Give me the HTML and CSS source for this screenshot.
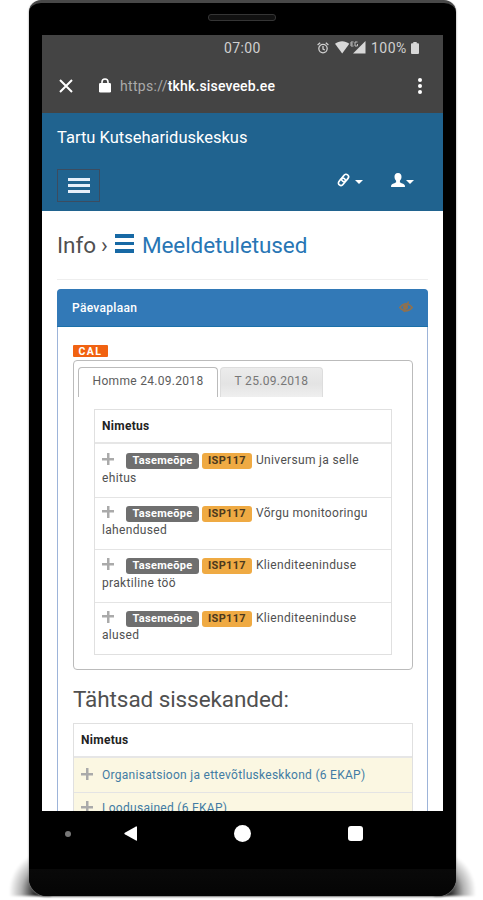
FILE: index.html
```html
<!DOCTYPE html>
<html lang="et">
<head>
  <meta charset="utf-8">
  <title>Tartu Kutsehariduskeskus</title>
  <link rel="stylesheet" href="styles.css">
</head>
<body>
  <div class="phone">
    <div class="speaker"></div>

    <div class="screen">
      <div class="browser">
        <div class="status-bar">
          <span class="clock">07:00</span>
          <svg class="alarm" width="12" height="12" viewBox="0 0 12 12" fill="none" stroke="#d0d0d0" stroke-width="1.3">
            <circle cx="6" cy="6.6" r="4.2"/>
            <path d="M6 4v3l1.8 1M.6 3 3.2.8M11.4 3 8.8.8"/>
          </svg>
          <svg class="signal" width="31" height="13" viewBox="0 0 31 13" fill="#d8d8d8">
            <path d="M0 2.800C4.200-.6 10-.6 14.300 2.800L7.200 12.400z"/>
            <path d="M30.500 0v12.400H18z"/>
            <path d="M16 1h2.500M16 3h2M16 5h2.500M16 1v4M22.500 1H20v4h2.500V3" fill="none" stroke="#bdbdbd"/>
          </svg>
          <span class="percent">100%</span>
          <svg class="battery" width="8" height="12" viewBox="0 0 8 12" fill="#d8d8d8">
            <path d="M2.300 0h3.400v1.200H7q1 0 1 1V11q0 1-1 1H1q-1 0-1-1V2.200q0-1 1-1h1.300z"/>
          </svg>
        </div>

        <div class="url-bar">
          <svg class="close" width="14" height="14" viewBox="0 0 14 14" stroke="#fff" stroke-width="2">
            <path d="M1 1l12 12M13 1L1 13"/>
          </svg>
          <svg class="lock" width="12" height="15" viewBox="0 0 12 15">
            <rect x="0" y="5" width="12" height="9.500" rx="1.300" fill="#fff"/>
            <path d="M3 6V4a3 3 0 0 1 6 0v2" fill="none" stroke="#fff" stroke-width="1.600"/>
          </svg>
          <div class="url">https://<b>tkhk.siseveeb.ee</b></div>
          <div class="dots"><i></i><i></i><i></i></div>
        </div>
      </div>

      <nav>
        <div class="brand">Tartu Kutsehariduskeskus</div>
        <div class="nav-row">
          <button class="menu-btn"><i></i><i></i><i></i></button>
          <div class="nav-icons">
            <a class="nav-link">
              <svg width="13" height="14" viewBox="0 0 13 14" fill="none" stroke="#fff" stroke-width="1.700" stroke-linecap="round">
                <rect x="5.600" y="1" width="5" height="8" rx="2.500" transform="rotate(38 8.100 5)"/>
                <rect x="2.400" y="4.800" width="5" height="8" rx="2.500" transform="rotate(38 4.900 8.800)"/>
              </svg>
              <span class="caret"></span>
            </a>
            <a class="nav-link user">
              <svg width="14" height="14" viewBox="0 0 14 14" fill="#fff">
                <path d="M7 0c2.600 0 3.600 1.700 3.500 4-.1 1.800-.8 2.900-1.600 3.700v1.500c.6.9 4.200 1.300 4.900 3.100l.2 1.700H0l.2-1.700c.7-1.800 4.300-2.200 4.900-3.100V7.700C4.300 6.900 3.600 5.800 3.500 4 3.400 1.700 4.400 0 7 0z"/>
              </svg>
              <span class="caret"></span>
            </a>
          </div>
        </div>
      </nav>

      <div class="content">
        <h1>
          <span class="info">Info</span>
          <span class="sep">›</span>
          <span class="list-icon"><i></i><i></i><i></i></span>
          <a class="page-name">Meeldetuletused</a>
        </h1>

        <div class="panel">
          <div class="panel-heading">
            <span>Päevaplaan</span>
            <svg width="14" height="12" viewBox="0 0 14 12" fill="none" stroke="#91714e" stroke-width="1.500">
              <path d="M.8 6.500Q7-1 13.200 6.500Q7 13.500 .8 6.500z"/>
              <circle cx="6.500" cy="6" r="1.800" fill="#91714e"/>
              <path d="M5 11L9.500.5"/>
            </svg>
          </div>

          <div class="panel-body">
            <span class="cal">CAL</span>

            <div class="tabs">
              <div class="tab-list">
                <a class="tab active">Homme 24.09.2018</a>
                <a class="tab">T 25.09.2018</a>
              </div>

              <div class="table plan">
                <div class="table-head">Nimetus</div>
                <div class="row">
                  <span class="plus"></span><span class="label">Tasemeõpe</span><span class="label orange">ISP117</span><span>Universum ja selle</span><br>ehitus
                </div>
                <div class="row">
                  <span class="plus"></span><span class="label">Tasemeõpe</span><span class="label orange">ISP117</span><span>Võrgu monitooringu</span><br>lahendused
                </div>
                <div class="row">
                  <span class="plus"></span><span class="label">Tasemeõpe</span><span class="label orange">ISP117</span><span>Klienditeeninduse</span><br>praktiline töö
                </div>
                <div class="row">
                  <span class="plus"></span><span class="label">Tasemeõpe</span><span class="label orange">ISP117</span><span>Klienditeeninduse</span><br>alused
                </div>
              </div>
            </div>

            <h2>Tähtsad sissekanded:</h2>

            <div class="table entries">
              <div class="table-head">Nimetus</div>
              <div class="row"><span class="plus"></span><a>Organisatsioon ja ettevõtluskeskkond (6 EKAP)</a></div>
              <div class="row"><span class="plus"></span><a>Loodusained (6 EKAP)</a></div>
            </div>
          </div>
        </div>
      </div>
    </div>

    <div class="phone-nav">
      <span class="dot"></span>
      <svg class="back" width="14" height="15" viewBox="0 0 14 15" fill="#fff"><path d="M13 .8v13.400Q13 15 12 14.500L.8 8.300q-1-.8 0-1.600L12 .5q1-.4 1 .3z"/></svg>
      <span class="home"></span>
      <span class="recent"></span>
    </div>
    <div class="chin"></div>
  </div>
</body>
</html>
```

FILE: styles.css
```css
* {
  box-sizing: border-box;
}

body {
  margin: 0;
  height: 900px;
  overflow: hidden;
  background: #fff;
  font-family: Roboto, "Liberation Sans", sans-serif;
  color: #505050;
}

.phone {
  width: 427px;
  height: 896px;
  margin-left: 29px;
  padding: 0 13px;
  background: #000;
  border-top: 3px solid #484848;
  border-radius: 12px 12px 18px 18px;
  box-shadow: 0 1px 2px #777;
  display: flex;
  flex-direction: column;
  position: relative;
}

/* soft shadow at both bottom corners */
.phone::before {
  content: "";
  position: absolute;
  z-index: -1;
  left: -20px;
  right: -20px;
  bottom: 0;
  height: 42px;
  background:
    radial-gradient(ellipse 42px 42px at 42px 90%, #000 30%, rgba(0, 0, 0, 0.3) 70%, transparent) left / 42px 100% no-repeat,
    radial-gradient(ellipse 42px 42px at 0 90%, #000 30%, rgba(0, 0, 0, 0.3) 70%, transparent) right / 42px 100% no-repeat;
  filter: blur(1px);
}

.speaker {
  width: 68px;
  height: 7px;
  margin: 11px auto 14px 166px;
  border: 1px solid #353535;
  border-radius: 3px;
  background: #111;
}

.screen {
  height: 776px;
  background: #fff;
  overflow: hidden;
}

.browser {
  height: 78px;
  background: #444;
}

.status-bar {
  height: 25px;
  display: flex;
  align-items: center;
  color: #d0d0d0;
  font-size: 14px;
}

.clock {
  width: 38px;
  margin-left: 182px;
  letter-spacing: 0.4px;
}

.alarm {
  margin-left: 55px;
}

.signal {
  margin-left: 6px;
}

.percent {
  width: 37px;
  margin-left: 5px;
  letter-spacing: 0.5px;
}

.battery {
  margin-left: 3px;
}

.url-bar {
  height: 51px;
  display: flex;
  align-items: center;
}

.close {
  margin-left: 17px;
}

.lock {
  margin: 0 9px 1px 26px;
}

.url {
  width: 158px;
  color: #aaa;
  font-size: 14px;
  letter-spacing: 0.3px;
  white-space: nowrap;
}

.url b {
  color: #fff;
  font-weight: 500;
  letter-spacing: 0.15px;
}

.dots {
  margin-left: 140px;
  display: flex;
  flex-direction: column;
  gap: 2px;
}

.dots i {
  width: 4px;
  height: 4px;
  border-radius: 50%;
  background: #fff;
}

nav {
  height: 98px;
  padding: 14px 29px 0 15px;
  background: #20638f;
  color: #fff;
}

.brand {
  height: 20px;
  font-size: 16.5px;
  line-height: 21px;
}

.nav-row {
  margin-top: 22px;
  display: flex;
  justify-content: space-between;
}

.menu-btn {
  width: 43px;
  height: 33px;
  padding: 0 0 1px;
  border: 1px solid #3b4c60;
  background: transparent;
  display: flex;
  flex-direction: column;
  align-items: center;
  justify-content: center;
  gap: 3px;
}

.menu-btn i {
  width: 22px;
  height: 3px;
  background: #e6effa;
}

.nav-icons {
  display: flex;
  gap: 28px;
  height: 22px;
  align-items: center;
}

.nav-link {
  display: flex;
  align-items: center;
  gap: 5px;
}

.nav-link.user {
  gap: 1px;
}

.caret {
  margin-top: 3px;
  border-top: 4px solid #fff;
  border-left: 4px solid transparent;
  border-right: 4px solid transparent;
}

.content {
  padding: 0 15px;
}

h1 {
  height: 69px;
  margin: 0 0 9px;
  border-bottom: 1px solid #eee;
  display: flex;
  align-items: center;
  font-size: 22.5px;
  font-weight: 400;
}

.info {
  width: 40px;
}

.sep {
  width: 18px;
  padding-left: 4px;
}

.list-icon {
  width: 19px;
  margin: -3px 8px 0 0;
  display: flex;
  flex-direction: column;
  gap: 4px;
}

.list-icon i {
  height: 3.5px;
  background: #1769a5;
}

.page-name {
  color: #2876b5;
  letter-spacing: -0.1px;
}

.panel {
  border: 1px solid #9db4d9;
  border-radius: 4px;
}

.panel-heading {
  height: 38px;
  margin: -1px -1px 0;
  padding: 0 15px;
  background: #3279b7;
  border-bottom: 1px solid #1b70a9;
  border-radius: 4px 4px 0 0;
  display: flex;
  align-items: center;
  justify-content: space-between;
  color: #fff;
  font-size: 12px;
  font-weight: 500;
  letter-spacing: 0.3px;
}

.panel-heading svg {
  margin-bottom: 2px;
}

.panel-body {
  padding: 18px 14px 0 15px;
}

.cal {
  display: block;
  width: 35px;
  height: 12px;
  border-radius: 1px;
  background: #f16211;
  color: #fff;
  font-size: 10.5px;
  font-weight: 700;
  line-height: 13px;
  letter-spacing: 1.4px;
  text-align: center;
}

.tabs {
  height: 310px;
  margin-top: 3px;
  padding: 6px 20px 0;
  border: 1px solid #bbb;
  border-radius: 4px;
}

.tab-list {
  display: flex;
  gap: 2px;
  margin-left: -16px;
}

.tab {
  width: 103px;
  height: 30px;
  border: 1px solid #ddd;
  border-bottom: 0;
  border-radius: 4px 4px 0 0;
  background: linear-gradient(#ececec, #e4e4e4 55%, #efefef);
  color: #777;
  font-size: 12px;
  line-height: 27px;
  letter-spacing: 0.3px;
  text-align: center;
}

.tab.active {
  width: 140px;
  border-color: #bbb;
  background: #fff;
  color: #5c5c5c;
}

.table {
  border: 1px solid #e0e0e0;
  font-size: 12px;
  line-height: 17.5px;
  letter-spacing: 0.33px;
}

.plan {
  margin-top: 12px;
}

.table-head {
  height: 34px;
  padding-left: 7px;
  border-bottom: 2px solid #e6e6e6;
  color: #222;
  font-weight: 700;
  line-height: 32px;
  letter-spacing: 0.3px;
}

.row {
  padding-left: 7px;
  white-space: nowrap;
}

.plan .row {
  height: 52.5px;
  padding-top: 8px;
}

.row + .row {
  border-top: 1px solid #e4e4e4;
}

.plan .row + .row {
  padding-top: 7px;
}

.plus {
  display: inline-block;
  width: 12px;
  height: 12px;
  margin-right: 12px;
  vertical-align: -1px;
  background: linear-gradient(#aaa, #aaa) center / 12px 2.500px no-repeat, linear-gradient(#aaa, #aaa) center / 2.500px 12px no-repeat;
}

.label {
  display: inline-block;
  width: 73px;
  height: 16px;
  margin-right: 3px;
  border-radius: 3px;
  background: #6f6f6f;
  color: #fff;
  font-size: 11px;
  font-weight: 700;
  line-height: 16px;
  letter-spacing: 0.3px;
  text-align: center;
}

.label.orange {
  width: 50px;
  margin-right: 4px;
  background: #efaa43;
  color: #4b391d;
}

h2 {
  height: 26px;
  margin: 17px 0 10px;
  font-size: 22.5px;
  font-weight: 400;
  line-height: 25px;
  letter-spacing: -0.08px;
}

.entries .row {
  height: 34px;
  background: #fbf7e2;
  line-height: 34px;
}

.entries .row + .row {
  line-height: 31px;
}

.entries .plus {
  margin-right: 9px;
}

.entries a {
  color: #427ca4;
  letter-spacing: 0.28px;
}

.phone-nav {
  height: 45px;
  display: flex;
  align-items: center;
}

.dot {
  width: 6px;
  height: 6px;
  margin-left: 23px;
  border-radius: 50%;
  background: #777;
}

.back {
  margin-left: 53px;
}

.home {
  width: 17px;
  height: 17px;
  margin-left: 96px;
  border-radius: 50%;
  background: #fff;
}

.recent {
  width: 15px;
  height: 15px;
  margin-left: 97px;
  border-radius: 3px;
  background: #fff;
}

.chin {
  flex: 1;
  margin: 13px -13px 0;
  border-radius: 0 0 18px 18px;
  background: linear-gradient(#090909, #050505);
}
```
